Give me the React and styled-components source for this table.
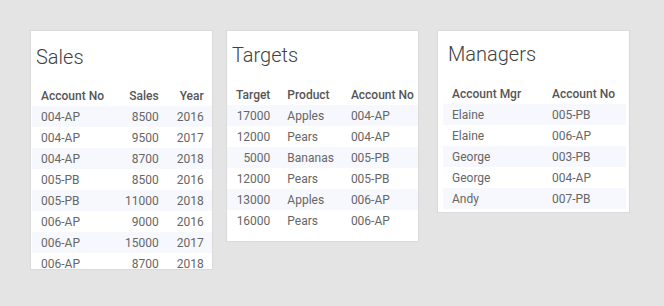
import React from 'react';
import styled, { createGlobalStyle } from 'styled-components';

const GlobalStyle = createGlobalStyle`
  html, body {
    margin: 0;
    padding: 0;
    background: #e4e4e4;
    font-family: Roboto, "Liberation Sans", sans-serif;
  }
`;

const Page = styled.div`
  display: flex;
  align-items: flex-start;
  padding: 31px 0 0 31px;
  width: 664px;
  height: 306px;
  box-sizing: border-box;
`;

const Card = styled.div`
  width: ${(p) => p.$width}px;
  height: ${(p) => p.$height}px;
  margin-right: ${(p) => p.$gap || 0}px;
  padding-top: ${(p) => p.$top}px;
  background: #fff;
  box-sizing: border-box;
  box-shadow: 0 0 0 1px #dadada;
  overflow: hidden;
`;

const Title = styled.h2`
  margin: 0 0 ${(p) => p.$below}px ${(p) => p.$left}px;
  font-size: 20px;
  font-weight: 300;
  line-height: 23px;
  color: #3f3f3f;
`;

const Table = styled.table`
  border-collapse: collapse;
  table-layout: fixed;
  margin-left: ${(p) => p.$inset || 0}px;
  font-size: 12px;
`;

const HeadCell = styled.th`
  width: ${(p) => p.$w}px;
  height: 20px;
  padding: 0 8px 0 9px;
  font-weight: 500;
  color: #555;
  text-align: ${(p) => (p.$right ? 'right' : 'left')};
  white-space: nowrap;
  box-sizing: border-box;
`;

const Row = styled.tr`
  background: ${(p) => (p.$striped ? '#f6f8fd' : '#fff')};
`;

const Cell = styled.td`
  height: 21px;
  padding: 0 8px 0 9px;
  color: #666;
  text-align: ${(p) => (p.$right ? 'right' : 'left')};
  white-space: nowrap;
`;

const DataTable = ({ columns, rows, inset }) => (
  <Table $inset={inset}>
    <thead>
      <tr>
        {columns.map((c) => (
          <HeadCell key={c.label} $w={c.width} $right={c.right}>
            {c.label}
          </HeadCell>
        ))}
      </tr>
    </thead>
    <tbody>
      {rows.map((r, i) => (
        <Row key={i} $striped={i % 2 === 0}>
          {r.map((v, j) => (
            <Cell key={j} $right={columns[j].right}>
              {v}
            </Cell>
          ))}
        </Row>
      ))}
    </tbody>
  </Table>
);

const sales = [
  ['004-AP', '8500', '2016'],
  ['004-AP', '9500', '2017'],
  ['004-AP', '8700', '2018'],
  ['005-PB', '8500', '2016'],
  ['005-PB', '11000', '2018'],
  ['006-AP', '9000', '2016'],
  ['006-AP', '15000', '2017'],
  ['006-AP', '8700', '2018'],
];

const targets = [
  ['17000', 'Apples', '004-AP'],
  ['12000', 'Pears', '004-AP'],
  ['5000', 'Bananas', '005-PB'],
  ['12000', 'Pears', '005-PB'],
  ['13000', 'Apples', '006-AP'],
  ['16000', 'Pears', '006-AP'],
];

const managers = [
  ['Elaine', '005-PB'],
  ['Elaine', '006-AP'],
  ['George', '003-PB'],
  ['George', '004-AP'],
  ['Andy', '007-PB'],
];

const App = () => (
  <>
    <GlobalStyle />
    <Page>
      <Card $width={181} $height={238} $gap={15} $top={15}>
        <Title $left={5} $below={17}>Sales</Title>
        <DataTable
          inset={1}
          columns={[
            { label: 'Account No', width: 84 },
            { label: 'Sales', width: 49, right: true },
            { label: 'Year', width: 45, right: true },
          ]}
          rows={sales}
        />
      </Card>
      <Card $width={191} $height={210} $gap={20} $top={13}>
        <Title $left={5} $below={18}>Targets</Title>
        <DataTable
          columns={[
            { label: 'Target', width: 53, right: true },
            { label: 'Product', width: 64 },
            { label: 'Account No', width: 74 },
          ]}
          rows={targets}
        />
      </Card>
      <Card $width={191} $height={181} $top={12}>
        <Title $left={10} $below={18}>Managers</Title>
        <DataTable
          inset={5}
          columns={[
            { label: 'Account Mgr', width: 100 },
            { label: 'Account No', width: 83 },
          ]}
          rows={managers}
        />
      </Card>
    </Page>
  </>
);

export default App;
